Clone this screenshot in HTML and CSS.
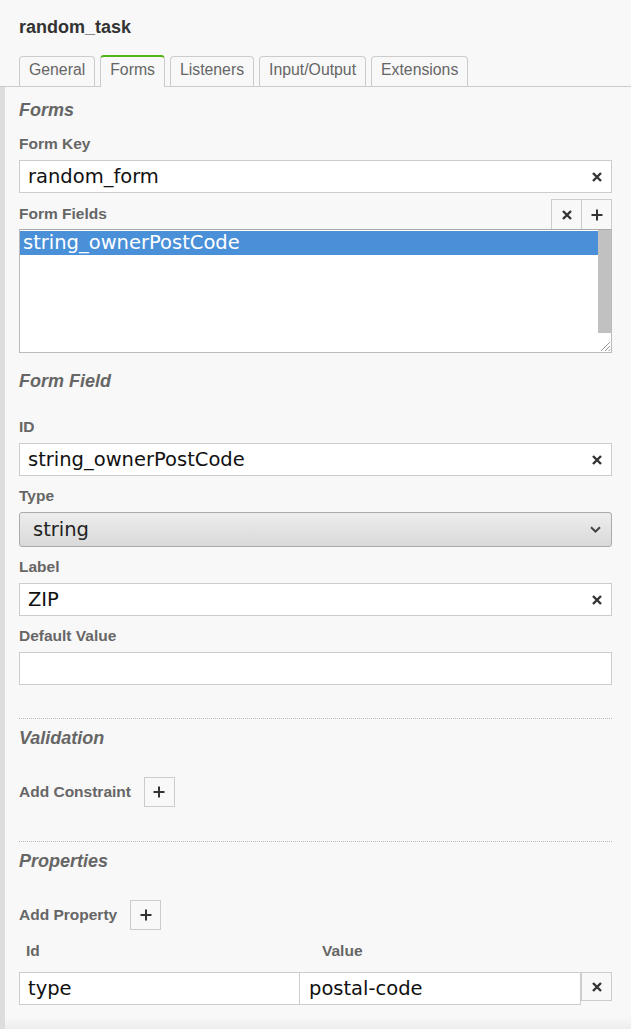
FILE: index.html
```html
<!DOCTYPE html>
<html>
<head>
<meta charset="utf-8">
<link rel="stylesheet" href="styles.css">
</head>
<body>
<div class="panel">
  <div class="header"><div class="title">random_task</div></div>
  <div class="tabs">
    <div class="tab">General</div>
    <div class="tab active">Forms</div>
    <div class="tab">Listeners</div>
    <div class="tab">Input/Output</div>
    <div class="tab">Extensions</div>
  </div>
  <div class="content">
    <div class="h h-first">Forms</div>
    <div class="lbl lbl-top">Form Key</div>
    <div class="input">
      <span class="val">random_form</span>
      <svg class="x-ico" width="10" height="10" viewBox="0 0 10 10"><path d="M1 1L9 9M9 1L1 9" stroke="#333" stroke-width="2.4" stroke-linecap="butt"/></svg>
    </div>
    <div class="list-head">
      <div class="lbl">Form Fields</div>
      <div class="btns">
        <div class="btn"><svg width="10" height="10" viewBox="0 0 10 10"><path d="M1 1L9 9M9 1L1 9" stroke="#333" stroke-width="2.4"/></svg></div>
        <div class="btn btn-join"><svg width="12" height="12" viewBox="0 0 12 12"><path d="M6 0.5V11.5M0.5 6H11.5" stroke="#333" stroke-width="2"/></svg></div>
      </div>
    </div>
    <div class="list">
      <div class="options">
        <div class="opt selected">string_ownerPostCode</div>
      </div>
      <div class="scroll"><div class="thumb"></div></div>
      <svg class="grip" width="14" height="14" viewBox="0 0 14 14"><path d="M13 4L4 13M13 8L8 13M13 11.5L11.5 13" stroke="#999" stroke-width="1"/></svg>
    </div>

    <div class="h h-mid">Form Field</div>
    <div class="lbl lbl-first">ID</div>
    <div class="input">
      <span class="val">string_ownerPostCode</span>
      <svg class="x-ico" width="10" height="10" viewBox="0 0 10 10"><path d="M1 1L9 9M9 1L1 9" stroke="#333" stroke-width="2.4"/></svg>
    </div>
    <div class="lbl">Type</div>
    <div class="select">
      <span class="val">string</span>
      <svg class="chev" width="11" height="7" viewBox="0 0 11 7"><path d="M1 1.2L5.5 5.5L10 1.2" fill="none" stroke="#444" stroke-width="2"/></svg>
    </div>
    <div class="lbl">Label</div>
    <div class="input">
      <span class="val">ZIP</span>
      <svg class="x-ico" width="10" height="10" viewBox="0 0 10 10"><path d="M1 1L9 9M9 1L1 9" stroke="#333" stroke-width="2.4"/></svg>
    </div>
    <div class="lbl">Default Value</div>
    <div class="input"><span class="val"></span></div>

    <div class="sep sep-1"></div>
    <div class="h h-after-sep">Validation</div>
    <div class="add-row">
      <div class="lbl">Add Constraint</div>
      <div class="btn"><svg width="12" height="12" viewBox="0 0 12 12"><path d="M6 0.5V11.5M0.5 6H11.5" stroke="#333" stroke-width="2"/></svg></div>
    </div>

    <div class="sep sep-2"></div>
    <div class="h h-after-sep">Properties</div>
    <div class="add-row">
      <div class="lbl">Add Property</div>
      <div class="btn"><svg width="12" height="12" viewBox="0 0 12 12"><path d="M6 0.5V11.5M0.5 6H11.5" stroke="#333" stroke-width="2"/></svg></div>
    </div>
    <div class="tbl-head">
      <div class="lbl col-id">Id</div>
      <div class="lbl col-value">Value</div>
    </div>
    <div class="tbl-row">
      <div class="cell"><span class="val">type</span></div>
      <div class="cell cell-2"><span class="val">postal-code</span></div>
      <div class="btn btn-row"><svg width="10" height="10" viewBox="0 0 10 10"><path d="M1 1L9 9M9 1L1 9" stroke="#333" stroke-width="2.4"/></svg></div>
    </div>
    <div class="footer"></div>
  </div>
</div>
</body>
</html>
```

FILE: styles.css
```css
* { box-sizing: border-box; }
html, body { margin: 0; padding: 0; background: #f8f8f8; }
body { font-family: "Liberation Sans", Arial, sans-serif; color: #333; overflow: hidden; }

.header { padding: 17px 19px 0 19px; }
.title { font-weight: bold; font-size: 18px; line-height: 20px; color: #333; }

.tabs {
  display: flex;
  align-items: flex-end;
  gap: 5px;
  margin-top: 18px;
  padding-left: 19px;
  border-bottom: 1px solid #ccc;
  height: 32px;
}
.tab {
  height: 30px;
  padding: 0 9px;
  border: 1px solid #ccc;
  border-bottom: none;
  border-radius: 4px 4px 0 0;
  font-size: 15.8px;
  line-height: 26px;
  color: #666;
  background: #f8f8f8;
}
.tab.active {
  height: 32px;
  margin-bottom: -1px;
  border-top: 2px solid #52b415;
  line-height: 26px;
  padding: 0 9px;
}

.content {
  border-left: 5px solid #ddd;
  padding: 0 19px 0 14px;
  display: flex;
  flex-direction: column;
}

.h {
  font-weight: bold;
  font-style: italic;
  font-size: 18px;
  line-height: 22px;
  color: #666;
}
.h-first { margin-top: 12px; }
.h-mid { margin-top: 17px; }
.h-after-sep { margin-top: 8px; }

.lbl {
  font-weight: bold;
  font-size: 15.5px;
  line-height: 18px;
  color: #666;
  margin-top: 11px;
}
.lbl-top { margin-top: 14px; }
.lbl-first { margin-top: 26px; }

.input, .select {
  margin-top: 7px;
  height: 33px;
  border: 1px solid #ccc;
  background: #fff;
  display: flex;
  align-items: center;
  justify-content: space-between;
  padding: 0 9px 0 8px;
}
.val {
  font-family: "DejaVu Sans", Verdana, sans-serif;
  font-size: 19.5px;
  color: #111;
  white-space: nowrap;
}
.x-ico { flex: none; }

.select {
  height: 35px;
  border: 1px solid #aaa;
  border-radius: 3px;
  background: linear-gradient(#ededed, #d9d9d9);
  padding: 0 10px 0 13px;
}
.select .val { color: #222; }

.list-head {
  margin-top: 6px;
  height: 30px;
  display: flex;
  justify-content: space-between;
  align-items: center;
}
.list-head .lbl { margin-top: 0; }
.btns { display: flex; align-self: stretch; }
.btn {
  width: 31px;
  height: 30px;
  border: 1px solid #ccc;
  background: #f8f8f8;
  display: flex;
  align-items: center;
  justify-content: center;
}
.btn-join { margin-left: -1px; }
.list-head .btn { border-bottom: none; }

.list {
  position: relative;
  height: 124px;
  border: 1px solid #bbb;
  border-top-color: #aaa;
  background: #fff;
  display: flex;
  padding-top: 1px;
}
.options { flex: 1; }
.opt {
  height: 24px;
  line-height: 24px;
  padding-left: 3px;
  font-family: "DejaVu Sans", Verdana, sans-serif;
  font-size: 19.5px;
  white-space: nowrap;
}
.opt.selected { background: #4a90d9; color: #fff; }
.scroll { width: 13px; margin-top: -1px; }
.thumb { height: 103px; background: #c1c1c1; }
.grip { position: absolute; right: 0; bottom: 0; }

.sep { border-top: 1px dotted #bbb; height: 0; }
.sep-1 { margin-top: 33px; }
.sep-2 { margin-top: 34px; }

.add-row {
  margin-top: 28px;
  display: flex;
  align-items: center;
  gap: 13px;
}
.add-row .lbl { margin-top: 0; }

.tbl-head {
  margin-top: 12px;
  display: grid;
  grid-template-columns: 280px 1fr;
}
.tbl-head .lbl { margin-top: 0; }
.col-id { padding-left: 7px; }
.col-value { padding-left: 23px; }

.tbl-row {
  margin-top: 12px;
  display: flex;
  align-items: flex-start;
}
.cell {
  height: 33px;
  border: 1px solid #ccc;
  background: #fff;
  display: flex;
  align-items: center;
  padding-left: 8px;
}
.cell:first-child { width: 281px; }
.cell-2 { width: 282px; margin-left: -1px; padding-left: 9px; }
.btn-row { height: 29px; width: 31px; margin-left: 0; }

.footer {
  margin: 12px -19px 0 -14px;
  height: 16px;
  background: linear-gradient(#f8f8f8, #e9e9e9);
}
```
